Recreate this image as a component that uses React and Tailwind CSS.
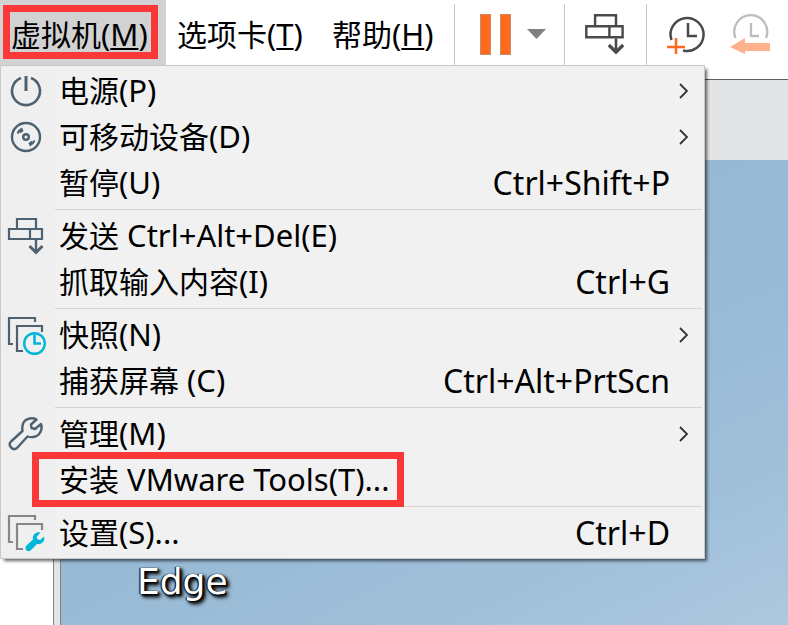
import React from "react";

const SLATE = "#4d6170";
const CYAN = "#00b7d8";

function PowerIcon() {
  return (
    <svg className="h-10 w-10" viewBox="0 0 40 40" fill="none" stroke={SLATE} strokeWidth="2.6" aria-hidden="true">
      <path d="M15 7A14 14 0 1 0 25 7" />
      <path d="M20 5v15" strokeWidth="3" />
    </svg>
  );
}

function DiscIcon() {
  return (
    <svg className="h-10 w-10" viewBox="0 0 40 40" fill="none" stroke={SLATE} strokeWidth="2.4" aria-hidden="true">
      <circle cx="20" cy="20" r="14" />
      <circle cx="20" cy="20" r="2.8" />
      <path d="M11.5 16.5Q13 13 16.5 11.5M14 15.5L17 13M28.5 23.5Q27 27 23.5 28.5M26 24.5L23 27" strokeWidth="2" />
    </svg>
  );
}

function SendKeysIcon({ color = SLATE, large = false }) {
  return (
    <svg
      className={large ? "h-[46px] w-[44px]" : "h-10 w-10"}
      viewBox="0 0 40 40"
      fill="none"
      stroke={color}
      strokeWidth="2.2"
      aria-hidden="true"
    >
      <path d="M11 12V3H30V12" />
      <path d="M3 13H36V23H3Z" />
      <path d="M24 13V23" />
      <path d="M30 24V37" strokeWidth="2.4" />
      <path d="M23.5 30L30 36.5L36.5 30" strokeWidth="3" />
    </svg>
  );
}

function Frames({ color }) {
  return (
    <g stroke={color} strokeWidth="2.2">
      <path d="M29 7V3H3V29H7" />
      <path d="M36 17V11H11V36H17" />
    </g>
  );
}

function SnapshotIcon() {
  return (
    <svg className="h-10 w-10" viewBox="0 0 40 40" fill="none" aria-hidden="true">
      <Frames color={SLATE} />
      <circle cx="28.5" cy="28.5" r="10.3" fill="#f0f0f0" stroke={CYAN} strokeWidth="2.4" />
      <path d="M28.5 19.5V28.5H35" stroke={CYAN} strokeWidth="2.6" />
    </svg>
  );
}

function WrenchIcon() {
  return (
    <svg className="h-10 w-10" viewBox="0 0 40 40" fill="none" stroke={SLATE} strokeWidth="2.4" strokeLinejoin="round" aria-hidden="true">
      <path d="M30.5 5.5C25 2.5 17 5.5 16.5 12Q16 15 16.5 17L5 27.500C1.500 31 6.500 37.500 11 34L21.500 22.500Q24 23.500 27.500 23C34 22 37 15 35 10L29 15L25.500 14L25 10.500Z" />
    </svg>
  );
}

function SettingsIcon() {
  return (
    <svg className="h-10 w-10" viewBox="0 0 40 40" fill="none" aria-hidden="true">
      <Frames color="#878787" />
      <path
        fill={CYAN}
        d="M34.500 19.500C30 18.500 26 22 27 26.500L20.500 32.500C17.500 35.500 21.500 40 24.500 37.500L31 31C35.500 32 39.500 28 38 23.500L34 27L31 26L31 23.500Z"
      />
    </svg>
  );
}

function Chevron() {
  return (
    <svg className="h-4 w-[10px]" viewBox="0 0 10 16" fill="none" stroke="#333" strokeWidth="1.8" aria-hidden="true">
      <path d="M1 1L8 8L1 15" />
    </svg>
  );
}

function ClockIcon({ faded = false }) {
  return (
    <svg className="h-11 w-11" viewBox="0 0 44 44" fill="none" aria-hidden="true">
      {faded ? (
        <>
          <path d="M6.500 28A16.500 16.500 0 1 1 37 28" stroke="#bdbdbd" strokeWidth="2.300" />
          <path d="M22 13V26H30" stroke="#bdbdbd" strokeWidth="2.300" />
          <path d="M1 37L16 28V33H41V41H16V44Z" fill="#ffb08c" />
        </>
      ) : (
        <>
          <path d="M6.500 30A16.500 16.500 0 1 1 18 40.500" stroke="#4a4a4a" strokeWidth="2.500" />
          <path d="M23 13V26H32" stroke="#4a4a4a" strokeWidth="2.500" />
          <path d="M2 37H20M11 28V44" stroke="#ff6a1d" strokeWidth="2.500" />
        </>
      )}
    </svg>
  );
}

const groups = [
  [
    { label: "电源", latin: "(P)", Icon: PowerIcon, submenu: true },
    { label: "可移动设备", latin: "(D)", Icon: DiscIcon, submenu: true },
    { label: "暂停", latin: "(U)", shortcut: "Ctrl+Shift+P" },
  ],
  [
    { label: "发送", latin: " Ctrl+Alt+Del(E)", Icon: SendKeysIcon },
    { label: "抓取输入内容", latin: "(I)", shortcut: "Ctrl+G" },
  ],
  [
    { label: "快照", latin: "(N)", Icon: SnapshotIcon, submenu: true },
    { label: "捕获屏幕", latin: " (C)", shortcut: "Ctrl+Alt+PrtScn" },
  ],
  [
    { label: "管理", latin: "(M)", Icon: WrenchIcon, submenu: true },
    { label: "安装", latin: " VMware Tools(T)...", marked: true },
  ],
  [{ label: "设置", latin: "(S)...", Icon: SettingsIcon, shortcut: "Ctrl+D" }],
];

function MenuRow({ label, latin, Icon, shortcut, submenu, marked }) {
  return (
    <button type="button" role="menuitem" className="relative flex h-[46px] w-full items-center text-left">
      <span className="flex w-[54px] shrink-0 pl-[5px]">{Icon && <Icon />}</span>
      <span className="flex-1 pl-1 whitespace-nowrap">
        {label}
        <span className="text-[31px] leading-none">{latin}</span>
      </span>
      {shortcut && <span className="pr-[34px] text-[32px]">{shortcut}</span>}
      {submenu && (
        <span className="pr-[15px]">
          <Chevron />
        </span>
      )}
      {marked && <span className="absolute -top-[5px] left-[31px] h-[55px] w-[372px] border-[7px] border-[#fb3838]" />}
    </button>
  );
}

function VmMenu() {
  return (
    <div
      role="menu"
      className="absolute top-full left-0 z-10 -mt-px w-[705px] border border-[#c8c8c8] bg-[linear-gradient(to_right,#efefef_54px,#f1f1f1_54px)] py-[2px] shadow-[3px_3px_3px_-1px_rgba(0,0,0,0.6)]"
    >
      {groups.map((items, i) => (
        <React.Fragment key={i}>
          {i > 0 && <div role="separator" className="my-[3px] mr-[2px] ml-[54px] h-px bg-[#d5d5d5]" />}
          {items.map((item) => (
            <MenuRow key={item.label} {...item} />
          ))}
        </React.Fragment>
      ))}
    </div>
  );
}

function Mnemonic({ letter }) {
  return (
    <span className="text-[31px] leading-none">
      (<span className="underline decoration-2 underline-offset-2">{letter}</span>)
    </span>
  );
}

export default function App() {
  return (
    <div className="flex min-h-screen flex-col overflow-hidden bg-white font-['Noto_Sans','Noto_Sans_CJK_SC',sans-serif] text-[30px] leading-[46px] text-black">
      <header className="relative flex h-[66px] shrink-0">
        <nav className="flex">
          <button type="button" className="relative w-[166px] bg-[#d2d2d2] pt-1 pl-[11px] text-left whitespace-nowrap">
            虚拟机
            <Mnemonic letter="M" />
            <span className="absolute top-[5px] left-[3px] h-[54px] w-[155px] border-[7px] border-[#fb3838]" />
          </button>
          <button type="button" className="w-[155px] pt-1 pl-[11px] text-left whitespace-nowrap">
            选项卡
            <Mnemonic letter="T" />
          </button>
          <button type="button" className="w-[133px] pt-1 pl-[11px] text-left whitespace-nowrap">
            帮助
            <Mnemonic letter="H" />
          </button>
        </nav>
        <div className="flex flex-1 pt-1">
          <div className="flex w-[110px] items-start border-l border-[#c8c8c8] pt-[10px] pl-[25px]">
            <button type="button" aria-label="Pause" className="flex gap-[9px]">
              <span className="h-[41px] w-[11px] border border-[#c98a68] bg-[#ff6a1d]" />
              <span className="h-[41px] w-[11px] border border-[#c98a68] bg-[#ff6a1d]" />
            </button>
            <button type="button" aria-label="Power options" className="ml-4 pt-[15px]">
              <svg className="h-[10px] w-[19px]" viewBox="0 0 19 10" aria-hidden="true">
                <path d="M0 0H19L9.500 10Z" fill="#808080" />
              </svg>
            </button>
          </div>
          <div className="flex w-[82px] items-start border-l border-[#c8c8c8] pt-[7px] pl-[18px]">
            <button type="button" aria-label="Send Ctrl+Alt+Del">
              <SendKeysIcon color="#4a4a4a" large />
            </button>
          </div>
          <div className="flex flex-1 items-start gap-5 border-l border-[#c8c8c8] pt-[6px] pl-[18px]">
            <button type="button" aria-label="Take snapshot">
              <ClockIcon />
            </button>
            <button type="button" aria-label="Revert snapshot" disabled>
              <ClockIcon faded />
            </button>
          </div>
        </div>
        <VmMenu />
      </header>
      <main className="mt-[13px] flex flex-1 flex-col border-t border-[#5e5e5e]">
        <div className="h-20 shrink-0 bg-[#e3e4e6]" />
        <div className="flex flex-1">
          <aside className="w-[53px] shrink-0 bg-white" />
          <div className="w-2 shrink-0 border-x border-[#858585] bg-[#e3e4e6]" />
          <section className="flex flex-1 items-end bg-[linear-gradient(155deg,#91b5d1_0%,#98bad5_55%,#a0c0da_80%,#adc8df_100%)]">
            <span className="pb-5 pl-[76px] font-['DejaVu_Sans',sans-serif] text-[36px] leading-[46px] text-white [text-shadow:-1px_0_1px_#000,1px_1px_2px_#000,2px_2px_3px_#000,3px_3px_4px_#000]">
              Edge
            </span>
          </section>
        </div>
      </main>
    </div>
  );
}
